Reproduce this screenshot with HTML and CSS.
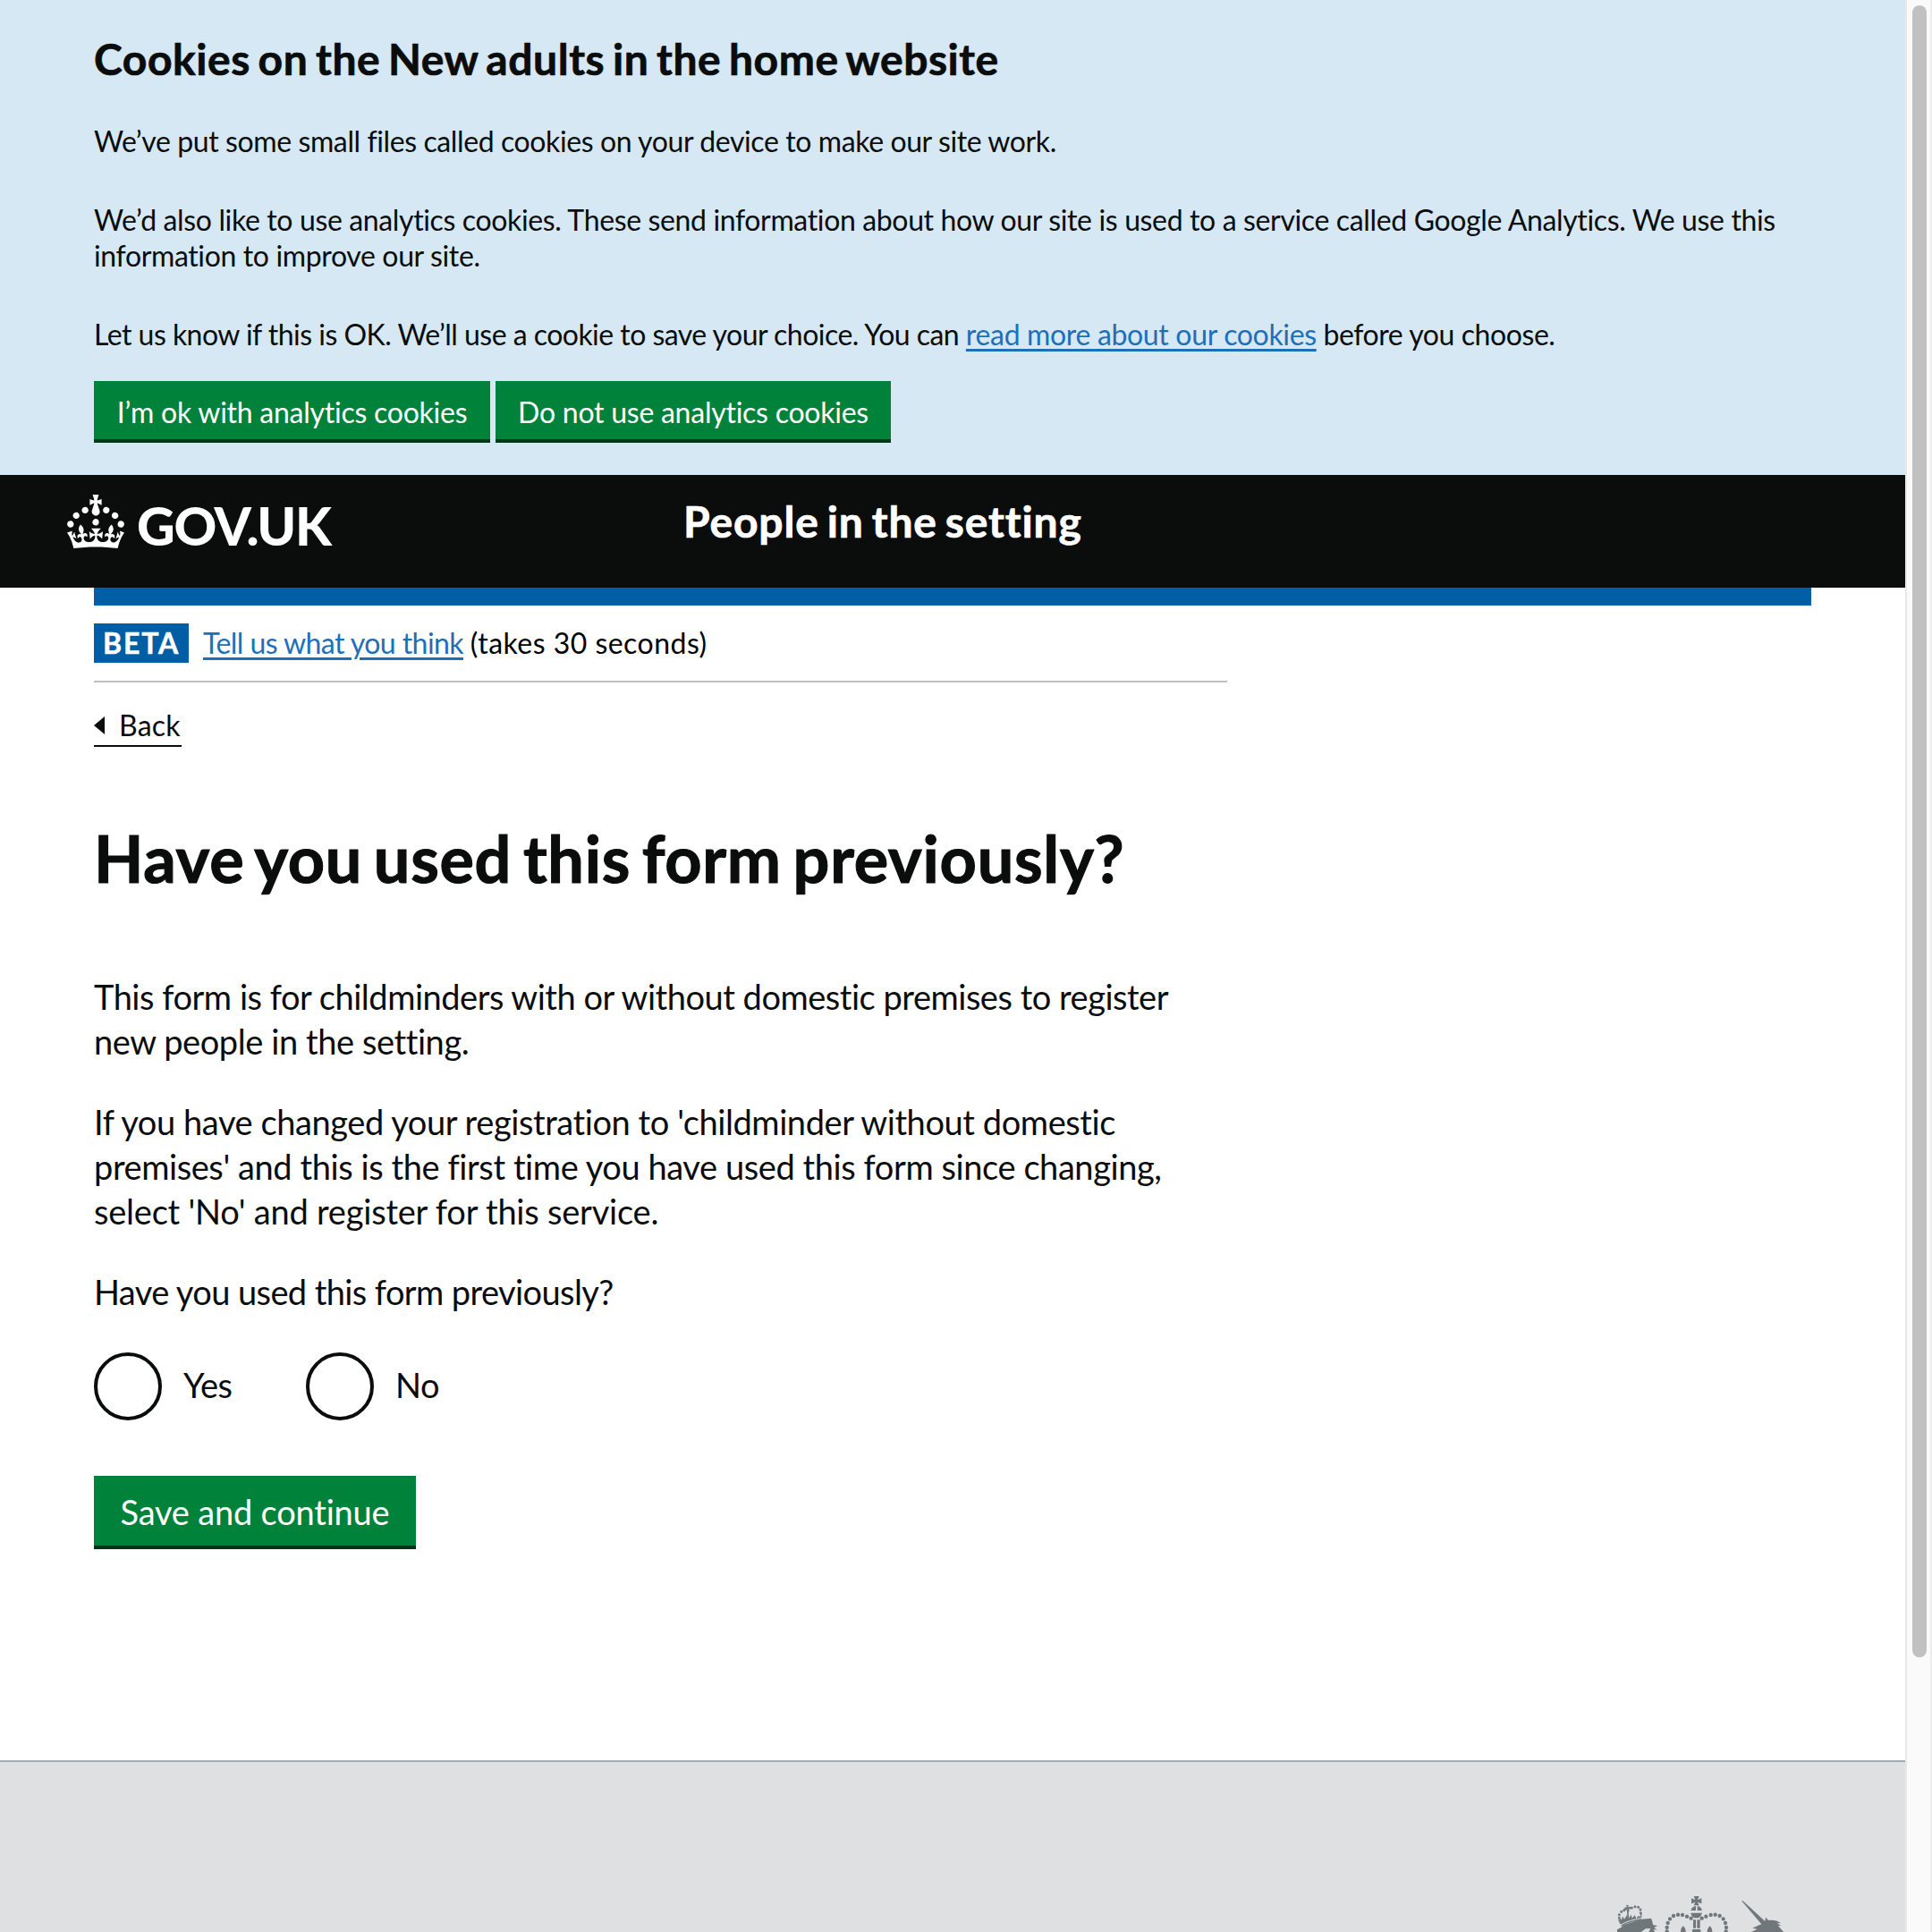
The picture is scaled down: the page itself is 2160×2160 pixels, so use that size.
FILE: index.html
```
<!DOCTYPE html>
<html lang="en">
<head>
<meta charset="utf-8">
<title>Have you used this form previously?</title>
<link rel="stylesheet" href="styles.css">
</head>
<body>
<div class="page">
  <section class="cookies">
    <h2 class="cookies-title">Cookies on the New adults in the home website</h2>
    <p>We’ve put some small files called cookies on your device to make our site work.</p>
    <p class="cookies-analytics">We’d also like to use analytics cookies. These send information about how our site is used to a service called Google Analytics. We use this<br>information to improve our site.</p>
    <p class="cookies-choice">Let us know if this is OK. We’ll use a cookie to save your choice. You can <a href="#" class="link cookies-link">read more about our cookies</a><span class="cookies-tail"> before you choose.</span></p>
    <div class="cookies-actions">
      <button class="button button-small">I’m ok with analytics cookies</button>
      <button class="button button-small">Do not use analytics cookies</button>
    </div>
  </section>

  <header class="header">
    <div class="logo">
      <svg class="crown" viewBox="0 0 32 30" width="64" height="60" fill="#fff" aria-hidden="true"><path d="M22.6 10.4c-1 .4-2-.1-2.4-1-.4-.9.1-2 1-2.4.9-.4 2 .1 2.4 1s-.1 2-1 2.4m-5.9 6.7c-.9.4-2-.1-2.4-1-.4-.9.1-2 1-2.4.9-.4 2 .1 2.4 1s-.1 2-1 2.4m10.8-3.7c-1 .4-2-.1-2.4-1-.4-.9.1-2 1-2.4.9-.4 2 .1 2.4 1s0 2-1 2.4m3.3 4.8c-1 .4-2-.1-2.4-1-.4-.9.1-2 1-2.4.9-.4 2 .1 2.4 1s-.1 2-1 2.4M17 4.7l2.3 1.2V2.5l-2.3.7-.2-.2.9-3h-3.4l.9 3-.2.2c-.1.1-2.3-.7-2.3-.7v3.4L15 4.7c.1.1.1.2.2.2l-1.3 4c-.1.2-.1.4-.1.6 0 1.1.8 2 1.9 2.2h.7c1-.2 1.9-1.1 1.9-2.1 0-.2 0-.4-.1-.6l-1.3-4c-.1-.2 0-.2.1-.3m-7.6 5.7c.9.4 2-.1 2.4-1 .4-.9-.1-2-1-2.4-.9-.4-2 .1-2.4 1s0 2 1 2.4m-5 3c.9.4 2-.1 2.4-1 .4-.9-.1-2-1-2.4-.9-.4-2 .1-2.4 1s.1 2 1 2.4m-3.2 4.8c.9.4 2-.1 2.4-1 .4-.9-.1-2-1-2.4-.9-.4-2 .1-2.4 1s0 2 1 2.4m14.8 11c4.4 0 8.6.3 12.3.8 1.1-4.5 2.4-7 3.7-8.8l-2.5-.9c.2 1.3.3 1.9 0 2.7-.4-.4-.8-1.1-1.1-2.3l-1.2 4c.7-.5 1.3-.8 2-.9-1.1 2.5-2.6 3.1-3.5 3-1.1-.2-1.7-1.2-1.5-2.1.3-1.2 1.5-1.5 2.1-.1 1.1-2.3-.8-3-2-2.3 1.9-1.9 2.1-3.5.6-5.6-2.1 1.6-2.1 3.2-1.2 5.5-1.2-1.4-3.2-.6-2.5 1.6.9-1.4 2.1-.5 1.9.8-.2 1.1-1.7 2.1-3.5 1.9-2.7-.2-2.9-2.1-2.9-3.6.7-.1 1.9.5 2.9 1.9l.4-4.3c-1.1 1.1-2.1 1.4-3.2 1.4.4-1.2 2.1-3 2.1-3h-5.4s1.7 1.9 2.1 3c-1.1 0-2.1-.2-3.2-1.4l.4 4.3c1-1.4 2.2-2 2.9-1.9-.1 1.5-.2 3.4-2.9 3.6-1.9.2-3.4-.8-3.5-1.9-.2-1.3 1-2.2 1.9-.8.7-2.3-1.2-3-2.5-1.6.9-2.2.9-3.9-1.2-5.5-1.5 2-1.3 3.7.6 5.6-1.2-.7-3.1 0-2 2.3.6-1.4 1.8-1.1 2.1.1.2.9-.3 1.9-1.5 2.1-.9.2-2.4-.5-3.5-3 .6 0 1.2.3 2 .9l-1.2-4c-.3 1.1-.7 1.9-1.1 2.3-.3-.8-.2-1.4 0-2.7l-2.9.9C1.3 23 2.6 25.5 3.7 30c3.7-.5 7.9-.8 12.3-.8"/></svg>
      <span class="logo-text">GOV.UK</span>
    </div>
    <div class="service-name">People in the setting</div>
  </header>

  <main class="main">
    <div class="blue-bar"></div>
    <div class="phase">
      <strong class="tag">BETA</strong>
      <span class="phase-text"><a href="#" class="link phase-link">Tell us what you think</a> <span class="phase-note">(takes 30 seconds)</span></span>
    </div>
    <a href="#" class="back"><svg viewBox="0 0 12 20" width="12" height="20" aria-hidden="true"><path d="M12 0v20L0 10z" fill="#0b0c0c"/></svg>Back</a>
    <h1>Have you used this form previously?</h1>
    <div class="copy">
      <p><span class="tight">This form is for childminders with or without domestic premises to register</span><br>new people in the setting.</p>
      <p>If you have changed your registration to 'childminder without domestic<br>premises' and this is the first time you have used this form since changing,<br><span class="loose">select 'No' and register for this service.</span></p>
      <p class="question">Have you used this form previously?</p>
    </div>
    <div class="radios">
      <div class="radio"><span class="circle"></span><span class="radio-label yes">Yes</span></div>
      <div class="radio"><span class="circle"></span><span class="radio-label">No</span></div>
    </div>
    <button class="button button-save">Save and continue</button>
  </main>

  <footer class="footer">
    <svg class="crest" viewBox="0 0 600 144" width="200" height="48" fill="#6f777b" aria-hidden="true">
      <!-- lion and its small crown -->
      <path d="M24 144v-8l14-8 8-8 60-19 32-3 4 11 2 11 15 3-11 6 10 8-12-2 4 9h-20l6-12-17 1-14 11z"/>
      <path d="M34 109l-3-12 8 6 3-12 6 10 9-14 5 12 9-13 3 12 9-11 5 12 8-10 8 6 1 9c-24 3-47 9-67 21z"/>
      <path d="M36 120c20-12 44-18 68-22" fill="none" stroke="#dee0e2" stroke-width="3"/>
      <path d="M35 116l-6-14M105 95l-2-17" fill="none" stroke="#6f777b" stroke-width="4"/>
      <path d="M59 72l2 26" fill="none" stroke="#6f777b" stroke-width="5"/>
      <path d="M49 59l8 3-3-9 8 1-1 7 8-2 1 8-8 1 4 7-8 1-2-7-7 3-3-7 6-2z"/>
      <g fill="none" stroke="#6f777b" stroke-width="9" stroke-linecap="round"><path d="M31 97h0M31 86h0M38 76h0M47 71h0M73 63h0M84 59h0M95 61h0M102 69h0M103 80h0"/></g>
      <!-- large crown -->
      <path d="M281 24h18l-5 12 13-5v18l-13-5 5 11h-18l5-11-13 5V31l13 5z"/>
      <path d="M288 57v15h-17c2-8 8-14 17-15M293 57c9 1 14 7 16 15h-16zM271 80h38c-3 9-8 15-13 17h-12c-7-2-11-8-13-17M279 103h9v28h-9zM292 103h10v28h-10zM276 135h28v9h-28z"/>
      <g fill="none" stroke="#6f777b" stroke-width="13" stroke-linecap="round"><path d="M191 129h0M191 142h0M194 114h0M201 100h0M213 90h0M228 86h0M243 87h0M258 92h0M272 98h0M308 98h0M322 92h0M338 87h0M353 86h0M368 90h0M380 100h0M387 114h0M390 129h0M389 142h0"/></g>
      <path d="M237 144c0-9 3-15 8-20 6 5 9 11 9 20zM326 144c0-9 4-15 9-20 5 5 8 11 8 20z"/>
      <!-- unicorn -->
      <path d="M441 39l5 1 74 68 2-13 10 10c15-3 28 0 41 9l-13 1 14 7-10 1 18 21H474l20-10-16-3 22-10 8-3z"/>
    </svg>
  </footer>
</div>
<div class="scrollbar"><div class="thumb"></div></div>
</body>
</html>
```
FILE: styles.css
```
* { box-sizing: border-box; }

body {
  margin: 0;
  display: flex;
  height: 2160px;
  overflow: hidden;
  background: #fff;
  color: #0b0c0c;
  font-family: Lato, "Noto Sans", sans-serif;
  font-size: 32px;
  line-height: 40px;
  letter-spacing: -0.4px;
}

h1, h2, p { margin: 0; }

.page {
  width: 2130px;
  height: 2160px;
  overflow: hidden;
  display: flex;
  flex-direction: column;
}

.link { color: #1d70b8; text-decoration-thickness: 3px; text-underline-offset: 4px; }

.cookies {
  height: 531px;
  flex: none;
  padding: 36px 105px 0;
  background: #d5e8f3;
  white-space: nowrap;
}
.cookies-title {
  margin-bottom: 42px;
  font-size: 48px;
  line-height: 60px;
  letter-spacing: 0.55px;
  word-spacing: -3.5px;
  -webkit-text-stroke: 0.7px;
}
.cookies p { margin-bottom: 48px; }
.cookies-analytics { letter-spacing: -0.36px; }
.cookies p.cookies-choice { margin-bottom: 32px; letter-spacing: -0.53px; }
.cookies-link { letter-spacing: -0.34px; }
.cookies-tail { letter-spacing: -0.43px; }
.cookies-actions { display: flex; gap: 6px; }

.button {
  border: 0;
  border-bottom: 4px solid #003618;
  background: #00823b;
  color: #fff;
  font-family: inherit;
  white-space: nowrap;
  padding: 2px 0 0;
}
.button-small {
  width: 443px;
  height: 69px;
  padding-top: 4px;
  font-size: 32px;
  letter-spacing: -0.25px;
}
.button-small + .button-small { width: 442px; }
.button-save {
  width: 360px;
  height: 82px;
  font-size: 38px;
  letter-spacing: -0.2px;
}

.header {
  height: 126px;
  flex: none;
  display: flex;
  align-items: flex-start;
  padding: 22px 0 0 75px;
  background: #0b0c0c;
  color: #fff;
}
.logo { width: 689px; display: flex; gap: 14px; }
.crown { flex: none; }
.logo-text {
  font-size: 59px;
  font-weight: 900;
  line-height: 70px;
  letter-spacing: -1.3px;
}
.service-name {
  font-size: 48px;
  font-weight: 700;
  line-height: 60px;
  letter-spacing: 0.85px;
  word-spacing: -3.5px;
  -webkit-text-stroke: 0.7px;
}

.main { padding: 0 105px; height: 1311px; flex: none; white-space: nowrap; }
.blue-bar { height: 20px; background: #005ea5; }
.phase {
  width: 1267px;
  height: 86px;
  display: flex;
  gap: 16px;
  padding-top: 20px;
  border-bottom: 2px solid #bfc1c3;
}
.tag {
  width: 106px;
  height: 44px;
  padding-left: 10px;
  background: #005ea5;
  color: #fff;
  line-height: 44px;
  letter-spacing: 1.84px;
  -webkit-text-stroke: 0.5px;
}
.phase-text { line-height: 44px; color: #000; }
.phase-link { letter-spacing: -0.56px; }
.phase-note { letter-spacing: 0.47px; }

.back {
  display: flex;
  align-items: center;
  gap: 16px;
  width: 98px;
  height: 45px;
  margin-top: 27px;
  padding-bottom: 1px;
  border-bottom: 2px solid #0b0c0c;
  color: #0b0c0c;
  text-decoration: none;
  letter-spacing: 0.2px;
}
h1 {
  margin-top: 79px;
  font-size: 72px;
  line-height: 90px;
  letter-spacing: 0.7px;
  word-spacing: -5.5px;
  -webkit-text-stroke: 1.1px;
}
.copy {
  margin-top: 85px;
  display: flex;
  flex-direction: column;
  gap: 40px;
  font-size: 38px;
  line-height: 50px;
  letter-spacing: -0.42px;
}
.tight { letter-spacing: -0.48px; }
.loose { letter-spacing: -0.22px; }
.question { letter-spacing: -0.6px; }

.radios { display: flex; margin: 43px 0 62px; font-size: 38px; }
.radio { width: 237px; display: flex; align-items: center; gap: 24px; }
.radio-label { padding-bottom: 4px; }
.circle { width: 76px; height: 76px; border: 4px solid #0b0c0c; border-radius: 50%; }
.yes { letter-spacing: -0.5px; }

.footer {
  flex: 1;
  border-top: 2px solid #a1acb2;
  background: #dee0e2;
  padding: 142px 0 0 1800px;
}
.crest { display: block; }

.scrollbar {
  width: 30px;
  height: 2160px;
  padding: 6px 4px 0;
  border-left: 2px solid #e8e8e8;
  border-right: 2px solid #ededed;
  background: #fafafa;
}
.thumb { width: 16px; height: 1847px; margin-left: 2px; border-radius: 8px; background: #c1c1c1; }
```
